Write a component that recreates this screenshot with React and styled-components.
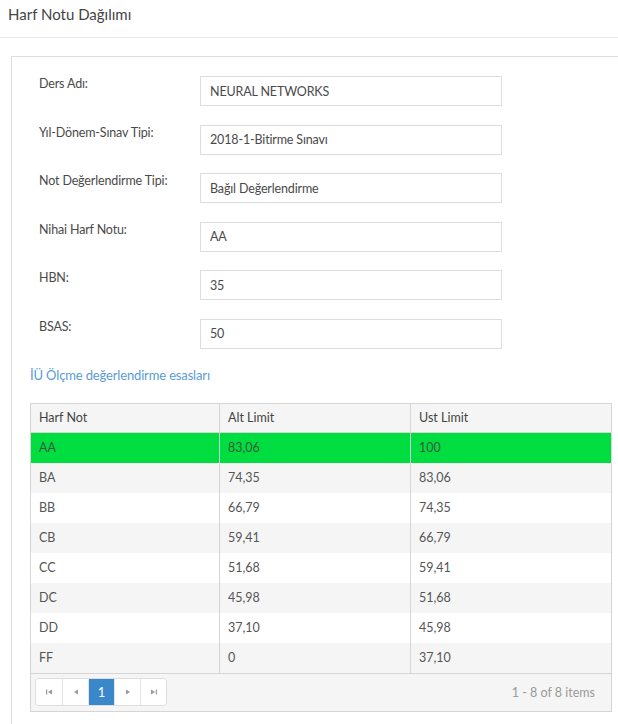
import styled, { createGlobalStyle } from 'styled-components';

const fields = [
  { label: 'Ders Adı:', value: 'NEURAL NETWORKS' },
  { label: 'Yıl-Dönem-Sınav Tipi:', value: '2018-1-Bitirme Sınavı' },
  { label: 'Not Değerlendirme Tipi:', value: 'Bağıl Değerlendirme' },
  { label: 'Nihai Harf Notu:', value: 'AA' },
  { label: 'HBN:', value: '35' },
  { label: 'BSAS:', value: '50' },
];

const grades = [
  ['AA', '83,06', '100'],
  ['BA', '74,35', '83,06'],
  ['BB', '66,79', '74,35'],
  ['CB', '59,41', '66,79'],
  ['CC', '51,68', '59,41'],
  ['DC', '45,98', '51,68'],
  ['DD', '37,10', '45,98'],
  ['FF', '0', '37,10'],
];

export default function App() {
  return (
    <>
      <GlobalStyle />
      <Header>
        <Title>Harf Notu Dağılımı</Title>
      </Header>

      <Panel>
        <Form>
          {fields.map((f) => (
            <FieldRow key={f.label}>
              <Label>{f.label}</Label>
              <ValueBox>{f.value}</ValueBox>
            </FieldRow>
          ))}
        </Form>

        <InfoLink href="#">İÜ Ölçme değerlendirme esasları</InfoLink>

        <Grid>
          <HeadRow>
            <Cell>Harf Not</Cell>
            <Cell>Alt Limit</Cell>
            <Cell>Ust Limit</Cell>
          </HeadRow>
          {grades.map(([g, lo, hi], i) => (
            <Row key={g} $active={i === 0} $striped={i % 2 === 1}>
              <Cell>{g}</Cell>
              <Cell>{lo}</Cell>
              <Cell>{hi}</Cell>
            </Row>
          ))}
          <Footer>
            <Pager>
              <PageButton>
                <Arrow viewBox="0 0 8 8"><rect x="1" y="1.5" width="1.2" height="5" /><path d="M7 1.5 L3 4 L7 6.5 Z" /></Arrow>
              </PageButton>
              <PageButton>
                <Arrow viewBox="0 0 8 8"><path d="M6 1.5 L2 4 L6 6.5 Z" /></Arrow>
              </PageButton>
              <PageButton $current>1</PageButton>
              <PageButton>
                <Arrow viewBox="0 0 8 8"><path d="M2 1.5 L6 4 L2 6.5 Z" /></Arrow>
              </PageButton>
              <PageButton>
                <Arrow viewBox="0 0 8 8"><path d="M1 1.5 L5 4 L1 6.5 Z" /><rect x="5.8" y="1.5" width="1.2" height="5" /></Arrow>
              </PageButton>
            </Pager>
            <Info>1 - 8 of 8 items</Info>
          </Footer>
        </Grid>
      </Panel>
    </>
  );
}

const GlobalStyle = createGlobalStyle`
  body {
    margin: 0;
    background: #fff;
    font-family: Lato, "Open Sans", sans-serif;
    color: #555;
  }
`;

const Header = styled.header`
  height: 37px;
  border-bottom: 1px solid #e8e8e8;
  padding: 0 8px;
  display: flex;
  align-items: center;
`;

const Title = styled.h1`
  margin: 0;
  font-size: 15px;
  font-weight: 400;
  color: #444;
  position: relative;
  top: -5px;
`;

const Panel = styled.section`
  margin: 18px 0 0 11px;
  border: 1px solid #ddd;
  border-right: none;
  border-bottom: none;
  padding: 18px 6px 10px 18px;
  min-height: 640px;
`;

const Form = styled.div`
  display: flex;
  flex-direction: column;
  gap: 17.6px;
  padding-left: 9px;
`;

const FieldRow = styled.div`
  display: flex;
  align-items: flex-start;
`;

const Label = styled.div`
  width: 161px;
  font-size: 12.5px;
  letter-spacing: -0.15px;
  color: #4a4a4a;
  padding-top: 1px;
`;

const ValueBox = styled.div`
  width: 302px;
  height: 30px;
  box-sizing: border-box;
  border: 1px solid #ddd;
  padding: 0 9px;
  display: flex;
  align-items: center;
  font-size: 12.5px;
  letter-spacing: -0.15px;
  color: #4a4a4a;
  margin-top: 1px;
`;

const InfoLink = styled.a`
  display: inline-block;
  margin-top: 18px;
  font-size: 13px;
  letter-spacing: -0.15px;
  color: #5b9bd5;
  text-decoration: none;
`;

const Grid = styled.div`
  margin-top: 20px;
  border: 1px solid #d5d5d5;
  font-size: 12.5px;
`;

const Row = styled.div`
  display: grid;
  grid-template-columns: 188px 191px 1fr;
  height: 30px;
  background: ${(p) => (p.$active ? '#00dd40' : p.$striped ? '#f5f5f5' : '#fff')};
  color: ${(p) => (p.$active ? '#3a5a3a' : '#555')};
`;

const HeadRow = styled(Row)`
  height: 28px;
  background: #f5f5f5;
  color: #444;
  border-bottom: 1px solid #d5d5d5;
`;

const Cell = styled.div`
  display: flex;
  align-items: center;
  padding-left: 8px;
  & + & {
    border-left: 1px solid #d5d5d5;
  }
`;

const Footer = styled.div`
  border-top: 1px solid #d5d5d5;
  background: #f5f5f5;
  height: 37px;
  display: flex;
  align-items: center;
  justify-content: space-between;
  padding: 0 16px 0 4px;
`;

const Pager = styled.div`
  display: flex;
  border: 1px solid #ddd;
  border-radius: 4px;
  overflow: hidden;
  background: #fff;
`;

const PageButton = styled.div`
  box-sizing: border-box;
  width: 26px;
  height: 26px;
  display: flex;
  align-items: center;
  justify-content: center;
  font-size: 13px;
  color: ${(p) => (p.$current ? '#fff' : '#999')};
  background: ${(p) => (p.$current ? '#3a87c9' : '#fff')};
  & + & {
    border-left: 1px solid #e5e5e5;
  }
`;

const Arrow = styled.svg`
  width: 8px;
  height: 8px;
  fill: #999;
`;

const Info = styled.div`
  color: #999;
  font-size: 12.5px;
`;
